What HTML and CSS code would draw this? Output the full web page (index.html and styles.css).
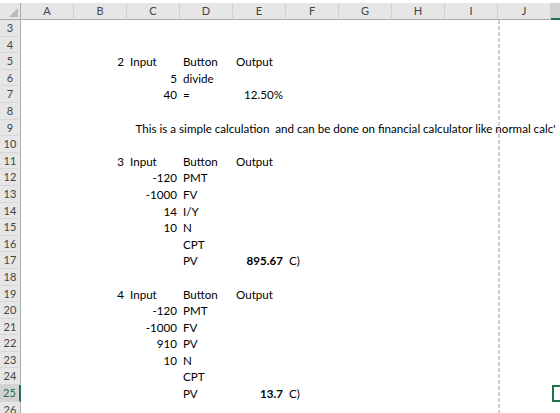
FILE: index.html
```html
<!DOCTYPE html>
<html lang="en">
<head>
    <meta charset="UTF-8">
    <meta name="viewport" content="width=device-width, initial-scale=1.0">
    <title>Calculator Examples</title>
    <link rel="stylesheet" href="styles.css">
</head>
<body>
    <div class="top-strip"></div>
    <div class="sheet" id="sheet">
        <div class="corner"><span class="corner-mark"></span></div>
        <!-- column headers + rows are built below -->
    </div>
    <div class="page-break"></div>

    <script>
        const columns = ['A', 'B', 'C', 'D', 'E', 'F', 'G', 'H', 'I', 'J', 'K'];

        // row number -> list of [column, text, extra class]
        const cells = {
            5: [['B', '2', 'num'], ['C', 'Input'], ['D', 'Button'], ['E', 'Output']],
            6: [['C', '5', 'num'], ['D', 'divide']],
            7: [['C', '40', 'num'], ['D', '='], ['E', '12.50%', 'num']],
            9: [['C', '  This is a simple calculation  and can be done on financial calculator like normal calc\'']],
            11: [['B', '3', 'num'], ['C', 'Input'], ['D', 'Button'], ['E', 'Output']],
            12: [['C', '-120', 'num'], ['D', 'PMT']],
            13: [['C', '-1000', 'num'], ['D', 'FV']],
            14: [['C', '14', 'num'], ['D', 'I/Y']],
            15: [['C', '10', 'num'], ['D', 'N']],
            16: [['D', 'CPT']],
            17: [['D', 'PV'], ['E', '895.67', 'num bold'], ['F', 'C)']],
            19: [['B', '4', 'num'], ['C', 'Input'], ['D', 'Button'], ['E', 'Output']],
            20: [['C', '-120', 'num'], ['D', 'PMT']],
            21: [['C', '-1000', 'num'], ['D', 'FV']],
            22: [['C', '910', 'num'], ['D', 'PV']],
            23: [['C', '10', 'num'], ['D', 'N']],
            24: [['D', 'CPT']],
            25: [['D', 'PV'], ['E', '13.7', 'num bold'], ['F', 'C)']]
        };
        const activeRow = 25;
        const activeCol = 'K';

        const sheet = document.getElementById('sheet');

        columns.forEach(col => {
            const head = document.createElement('div');
            head.className = 'col-head';
            if (col === activeCol) {
                // column is only partly in view, so no letter shows
                head.classList.add('active');
            } else {
                head.textContent = col;
            }
            sheet.appendChild(head);
        });

        for (let row = 3; row <= 26; row++) {
            const rowHead = document.createElement('div');
            rowHead.className = 'row-head' + (row === activeRow ? ' active' : '');
            rowHead.textContent = row;
            sheet.appendChild(rowHead);

            const rowCells = cells[row] || [];
            columns.forEach(col => {
                const cell = document.createElement('div');
                cell.className = 'cell';
                const entry = rowCells.find(c => c[0] === col);
                if (entry) {
                    cell.textContent = entry[1];
                    if (entry[2]) cell.className += ' ' + entry[2];
                }
                if (row === activeRow && col === activeCol) {
                    cell.classList.add('selected');
                }
                sheet.appendChild(cell);
            });
        }
    </script>
</body>
</html>
```

FILE: styles.css
```css
body {
    margin: 0;
    padding: 0;
    background-color: #fff;
    font-family: "Lato", "Open Sans", sans-serif;
    font-size: 11.6px;
    color: #000;
    overflow: hidden;
    width: 560px;
    height: 413px;
    position: relative;
}
.top-strip {
    height: 3px;
    background-color: #fff;
}
.sheet {
    display: grid;
    grid-template-columns: 21px repeat(10, 53px) 49px;
    grid-template-rows: 17px;
    grid-auto-rows: 16.6px;
    width: 600px;
}
.corner {
    background-color: #e6e6e6;
    border-right: 1px solid #ababab;
    border-bottom: 1px solid #ababab;
    position: relative;
}
.corner-mark {
    position: absolute;
    right: 2px;
    bottom: 2px;
    width: 0;
    height: 0;
    border-left: 9px solid transparent;
    border-bottom: 9px solid #b9b9b9;
}
.col-head {
    background-color: #e6e6e6;
    border-right: 1px solid #d0d0d0;
    border-bottom: 1px solid #ababab;
    color: #444;
    font-size: 11px;
    text-align: center;
    line-height: 16px;
}
.col-head.active {
    background-color: #d2d2d2;
    border-bottom: 2px solid #217346;
}
.row-head {
    background-color: #e6e6e6;
    border-right: 1px solid #ababab;
    border-bottom: 1px solid #d6d6d6;
    color: #444;
    font-size: 11px;
    text-align: center;
    line-height: 16px;
}
.row-head.active {
    background-color: #d2d2d2;
    color: #217346;
    border-right: 2px solid #217346;
}
.cell {
    padding: 0 3px;
    line-height: 17px;
    white-space: pre;
    overflow: visible;
    min-width: 0;
}
.num {
    text-align: right;
}
.bold {
    font-weight: bold;
}
.selected {
    box-shadow: inset 0 0 0 2px #217346;
    margin-left: 1px;
}
.page-break {
    position: absolute;
    left: 498px;
    top: 20px;
    width: 2px;
    height: 400px;
    background: repeating-linear-gradient(to bottom, #cfcfcf 0, #cfcfcf 4px, transparent 4px, transparent 6px);
}
```
